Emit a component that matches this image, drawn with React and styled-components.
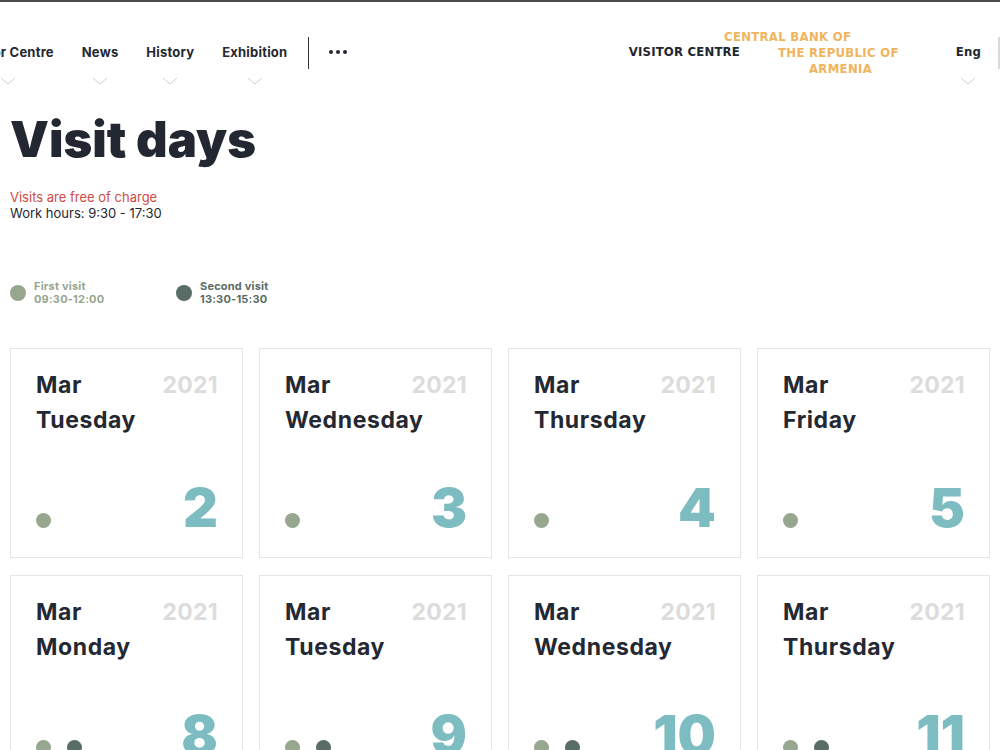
import React from "react";
import styled, { createGlobalStyle } from "styled-components";

const GlobalStyle = createGlobalStyle`
  html, body {
    margin: 0;
    padding: 0;
    background: #fff;
  }
  body {
    font-family: Inter, "Noto Sans", sans-serif;
    color: #242832;
    overflow-x: hidden;
  }
`;

const Page = styled.div`
  border-top: 2px solid #4a4a4a;
  width: 1000px;
  overflow: hidden;
`;

const Header = styled.header`
  display: flex;
  align-items: flex-start;
  height: 100px;
  padding-top: 34px;
  box-sizing: border-box;
`;

const Nav = styled.nav`
  display: flex;
  align-items: flex-start;
  margin-left: -37px;
`;

const NavItem = styled.div`
  display: flex;
  flex-direction: column;
  align-items: center;
  margin-right: 28px;
  font-size: 13px;
  font-weight: 700;
  letter-spacing: 0.2px;
  white-space: nowrap;
  line-height: 32px;
  color: #242832;
`;

const Chevron = () => (
  <ChevronIcon width="16" height="8" viewBox="0 0 16 8">
    <polyline points="1,1 8,7 15,1" />
  </ChevronIcon>
);

const ChevronIcon = styled.svg`
  display: block;
  margin-top: 9px;
  fill: none;
  stroke: #cfcfcf;
  stroke-width: 1;
`;

const Divider = styled.span`
  display: block;
  width: ${p => p.$light ? 2 : 1}px;
  height: 32px;
  background: ${p => p.$light ? "#d8d8d8" : "#333"};
  margin: ${p => p.$light ? "1px 0 0 17px" : "1px 20px 0 -7px"};
`;

const More = styled.span`
  display: flex;
  gap: 3px;
  align-items: center;
  height: 32px;
  span {
    width: 4px;
    height: 4px;
    border-radius: 50%;
    background: #242832;
  }
`;

const Brand = styled.div`
  display: flex;
  align-items: flex-start;
  margin-left: auto;
  font-family: "DejaVu Sans Condensed", "DejaVu Sans", sans-serif;
  font-weight: 700;
  font-size: 13px;
`;

const BrandName = styled.span`
  line-height: 32px;
  color: #222630;
  letter-spacing: 0.2px;
`;

const Logo = styled.div`
  display: flex;
  flex-direction: column;
  margin: -7px 0 0 -16px;
  color: #f0b45d;
  line-height: 16px;
  letter-spacing: 0.3px;
`;

const LogoLine = styled.span`
  padding-left: ${p => p.$indent}px;
  white-space: nowrap;
`;

const Lang = styled(NavItem)`
  margin: 0 0 0 57px;
`;

const Main = styled.main`
  padding: 0 10px 40px;
`;

const Title = styled.h1`
  margin: 0;
  font-size: 49px;
  font-weight: 900;
  letter-spacing: 0;
  line-height: 76px;
  color: #232731;
`;

const Info = styled.p`
  margin: 11px 0 0;
  font-size: 13px;
  line-height: 16px;
  span {
    display: block;
  }
  span:first-child {
    color: #d24b40;
  }
`;

const Legend = styled.div`
  display: flex;
  margin-top: 59px;
`;

const LegendItem = styled.div`
  display: flex;
  align-items: center;
  gap: 8px;
  width: 166px;
  font-size: 11px;
  font-weight: 700;
  letter-spacing: 0.2px;
  line-height: 13px;
  color: ${p => p.$color};
`;

const Dot = styled.span`
  flex: none;
  width: ${p => p.$size || 15}px;
  height: ${p => p.$size || 15}px;
  border-radius: 50%;
  background: ${p => p.$color};
`;

const Grid = styled.div`
  display: grid;
  grid-template-columns: repeat(4, 233px);
  column-gap: 16px;
  row-gap: 17px;
  margin-top: 42px;
`;

const Card = styled.div`
  display: flex;
  flex-direction: column;
  height: 210px;
  box-sizing: border-box;
  padding: 19px 24px 29px 25px;
  border: 1px solid #e5e5e5;
`;

const CardTop = styled.div`
  display: flex;
  justify-content: space-between;
  font-size: 23px;
  font-weight: 700;
  letter-spacing: 0.6px;
  line-height: 35px;
`;

const Year = styled.span`
  color: #dcdcdc;
  letter-spacing: 0.3px;
`;

const Weekday = styled.div`
  font-size: 23px;
  font-weight: 700;
  letter-spacing: 0.6px;
  line-height: 35px;
`;

const CardBottom = styled.div`
  display: flex;
  align-items: flex-end;
  justify-content: space-between;
  margin-top: auto;
`;

const Dots = styled.div`
  display: flex;
  gap: 16px;
`;

const DayNumber = styled.span`
  font-size: 54px;
  font-weight: 900;
  line-height: 40px;
  color: #7dbdc1;
`;

const FIRST = "#96a68f";
const SECOND = "#5a6c66";

const days = [
  { day: 2, name: "Tuesday", visits: 1 },
  { day: 3, name: "Wednesday", visits: 1 },
  { day: 4, name: "Thursday", visits: 1 },
  { day: 5, name: "Friday", visits: 1 },
  { day: 8, name: "Monday", visits: 2 },
  { day: 9, name: "Tuesday", visits: 2 },
  { day: 10, name: "Wednesday", visits: 2 },
  { day: 11, name: "Thursday", visits: 2 },
];

const navLinks = ["Visitor Centre", "News", "History", "Exhibition"];

export default function App() {
  return (
    <Page>
      <GlobalStyle />
      <Header>
        <Nav>
          {navLinks.map(link => (
            <NavItem key={link}>
              {link}
              <Chevron />
            </NavItem>
          ))}
          <Divider />
          <More><span /><span /><span /></More>
        </Nav>
        <Brand>
          <BrandName>VISITOR CENTRE</BrandName>
          <Logo>
            <LogoLine $indent={0}>CENTRAL BANK OF</LogoLine>
            <LogoLine $indent={54}>THE REPUBLIC OF</LogoLine>
            <LogoLine $indent={85}>ARMENIA</LogoLine>
          </Logo>
          <Lang>
            Eng
            <Chevron />
          </Lang>
          <Divider $light />
        </Brand>
      </Header>
      <Main>
        <Title>Visit days</Title>
        <Info>
          <span>Visits are free of charge</span>
          <span>Work hours: 9:30 - 17:30</span>
        </Info>
        <Legend>
          <LegendItem $color={FIRST}>
            <Dot $color={FIRST} $size={16} />
            <div>First visit<br />09:30-12:00</div>
          </LegendItem>
          <LegendItem $color={SECOND}>
            <Dot $color={SECOND} $size={16} />
            <div>Second visit<br />13:30-15:30</div>
          </LegendItem>
        </Legend>
        <Grid>
          {days.map(d => (
            <Card key={d.day}>
              <CardTop>
                <span>Mar</span>
                <Year>2021</Year>
              </CardTop>
              <Weekday>{d.name}</Weekday>
              <CardBottom>
                <Dots>
                  <Dot $color={FIRST} />
                  {d.visits > 1 && <Dot $color={SECOND} />}
                </Dots>
                <DayNumber>{d.day}</DayNumber>
              </CardBottom>
            </Card>
          ))}
        </Grid>
      </Main>
    </Page>
  );
}
